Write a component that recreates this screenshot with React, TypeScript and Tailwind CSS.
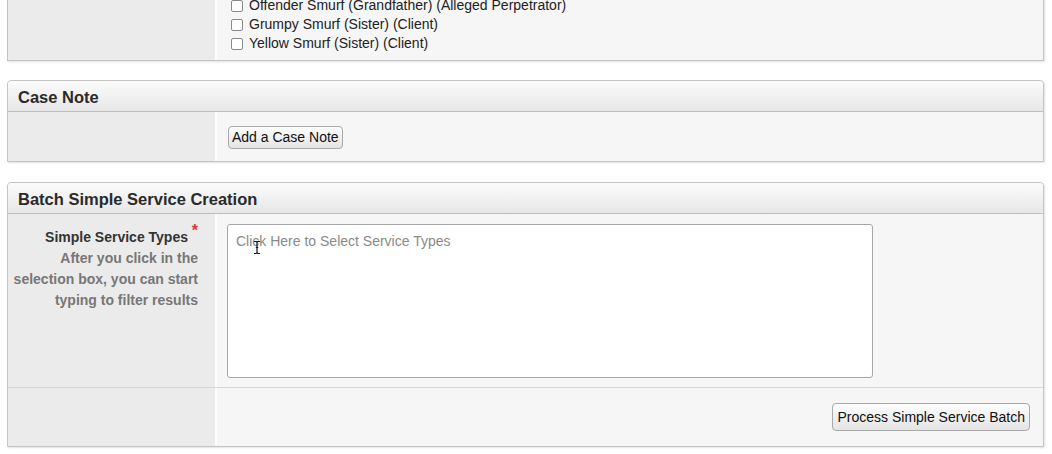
import React from 'react';

const font = { fontFamily: '"Liberation Sans", Arial, sans-serif' };

const Panel: React.FC<{ title?: string; children: React.ReactNode; className?: string }> = ({ title, children, className }) => (
  <div className={`mx-[7px] w-[1037px] rounded-t-[4px] border border-[#c4c4c4] shadow-[1px_1px_2px_rgba(0,0,0,0.12)] ${className ?? ''}`}>
    {title && (
      <div className="h-[31px] rounded-t-[4px] border-b border-[#bdbdbd] bg-gradient-to-b from-[#fbfbfb] to-[#e7e7e7] pl-[10px] text-[16.5px] leading-[32px] font-bold text-[#2a2a2a]">
        {title}
      </div>
    )}
    {children}
  </div>
);

const Row: React.FC<{ left?: React.ReactNode; children?: React.ReactNode; className?: string; rightClass?: string }> = ({ left, children, className, rightClass }) => (
  <div className={`flex ${className ?? ''}`}>
    <div className="w-[207px] shrink-0 bg-[#ebebeb] pr-[17px] text-right">{left}</div>
    <div className="w-[2px] shrink-0 bg-[#fdfdfd]" />
    <div className={`flex-1 bg-[#f6f6f6] ${rightClass ?? ''}`}>{children}</div>
  </div>
);

const people = [
  'Offender Smurf (Grandfather) (Alleged Perpetrator)',
  'Grumpy Smurf (Sister) (Client)',
  'Yellow Smurf (Sister) (Client)',
];

const IBeam = () => (
  <svg className="absolute left-[25px] top-[15px]" width="8" height="15" viewBox="0 0 8 15" fill="none">
    <path d="M1 1.5h2.2L4 2.3l.8-.8H7M1 13.5h2.2l.8-.8.8.8H7M4 2.3v10.4M2.8 7.5h2.4" stroke="#111" strokeWidth="1.2" />
  </svg>
);

export default function App() {
  return (
    <div className="h-[454px] w-[1052px] overflow-hidden bg-white text-[14px] text-[#222]" style={font}>
      <Panel className="-mt-[12px] rounded-t-none border-t-0">
        <Row rightClass="pl-[14px] pt-[8px] pb-[7px]">
          {people.map((p) => (
            <label key={p} className="flex h-[19px] items-center gap-[6px] leading-[19px]">
              <span className="inline-block h-[12px] w-[12px] rounded-[2px] border border-[#8a8a8a] bg-white" />
              <span>{p}</span>
            </label>
          ))}
        </Row>
      </Panel>

      <Panel title="Case Note" className="mt-[19px]">
        <Row rightClass="pl-[11px] pt-[14px] pb-[12px]">
          <button className="h-[23px] rounded-[4px] border border-[#a9a9a9] bg-gradient-to-b from-[#fdfdfd] to-[#e4e4e4] px-[3px] text-[14px] text-[#111]">
            Add a Case Note
          </button>
        </Row>
      </Panel>

      <Panel title="Batch Simple Service Creation" className="mt-[20px]">
        <Row
          className="border-b border-[#d6d6d6]"
          left={
            <div className="pt-[13px] text-[14px] leading-[21px] font-bold">
              <div className="relative inline-block pr-[10px] text-[#333]">
                Simple Service Types
                <span className="absolute -top-[7px] right-0 text-[16px] text-[#d43a3a]">*</span>
              </div>
              <div className="text-[#777]">
                After you click in the
                <br />
                selection box, you can start
                <br />
                typing to filter results
              </div>
            </div>
          }
          rightClass="pl-[10px] pt-[10px] pb-[9px]"
        >
          <div className="relative h-[154px] w-[646px] rounded-[3px] border border-[#a8a8a8] bg-white px-[8px] pt-[6px] text-[14px] text-[#8a8a8a]">
            Click Here to Select Service Types
            <IBeam />
          </div>
        </Row>
        <Row rightClass="flex justify-end pr-[13px] pt-[15px] pb-[14px]" className="h-[58px]">
          <button className="h-[28px] rounded-[4px] border border-[#a9a9a9] bg-gradient-to-b from-[#fdfdfd] to-[#e4e4e4] px-[4px] text-[14px] text-[#111]">
            Process Simple Service Batch
          </button>
        </Row>
      </Panel>
    </div>
  );
}
